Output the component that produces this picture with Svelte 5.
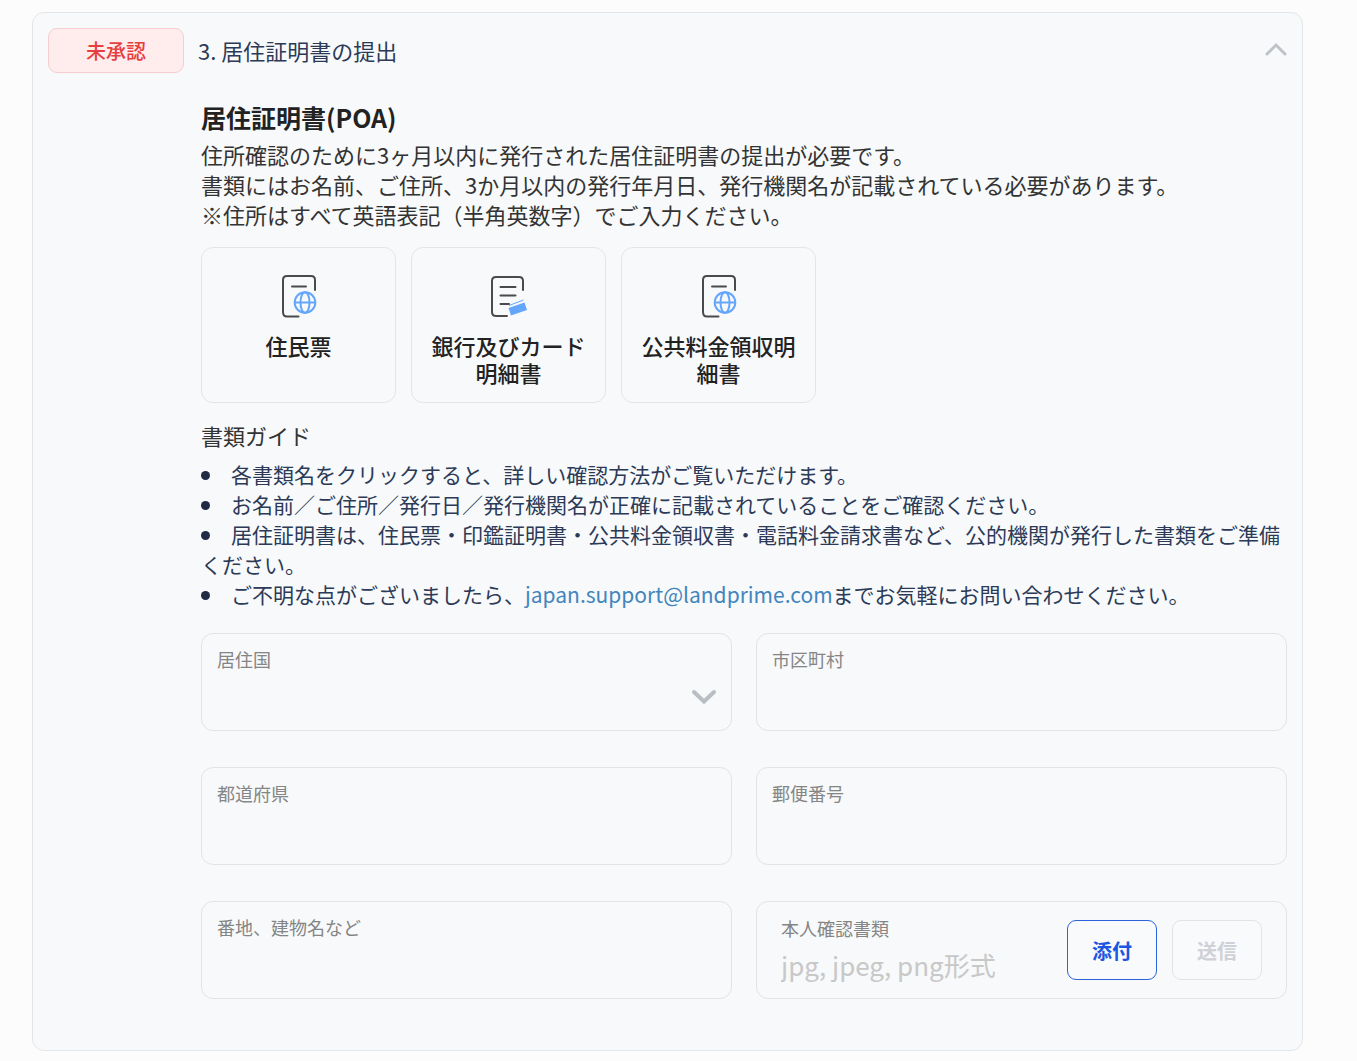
<script>
  let expanded = true;
  let country = '';
  let city = '';
  let prefecture = '';
  let postcode = '';
  let address = '';
  let fileName = '';

  const documents = [
    { name: '住民票', icon: 'globe' },
    { name: '銀行及びカード明細書', icon: 'card' },
    { name: '公共料金領収明細書', icon: 'globe' }
  ];

  const toggle = () => { expanded = !expanded; };
</script>

<section class="panel">
  <header class="panel-head">
    <span class="badge">未承認</span>
    <h2 class="title">3. 居住証明書の提出</h2>
    <button class="toggle" type="button" aria-label="開閉" aria-expanded={expanded} on:click={toggle}>
      <svg width="24" height="20" viewBox="0 0 24 20"><path d="M4 13 L13 4 L22 13" /></svg>
    </button>
  </header>

  {#if expanded}
    <div class="panel-body">
      <h3 class="heading">居住証明書(POA)</h3>
      <p class="desc">
        住所確認のために3ヶ月以内に発行された居住証明書の提出が必要です。<br />
        書類にはお名前、ご住所、3か月以内の発行年月日、発行機関名が記載されている必要があります。<br />
        ※住所はすべて英語表記（半角英数字）でご入力ください。
      </p>

      <div class="docs">
        {#each documents as doc}
          <button class="doc" type="button">
            <svg class="doc-icon" width="44" height="48" viewBox="0 0 44 48">
              {#if doc.icon === 'globe'}
                <g class="ink">
                  <path d="M38 18 V8 Q38 4 34 4 H10 Q6 4 6 8 V40 Q6 44.500 10 44.500 H21.500" />
                  <path d="M15 14.500 H29" />
                </g>
                <g class="globe">
                  <circle cx="28" cy="30.500" r="10.300" />
                  <ellipse cx="28" cy="30.500" rx="4.500" ry="10.300" />
                  <path d="M17.700 30.500 H38.300" />
                </g>
              {:else}
                <g class="ink">
                  <path d="M36 18 V9 Q36 5 32 5 H9 Q5 5 5 9 V40 Q5 44 9 44 H20" />
                  <path d="M13.500 15 H28.500 M13.500 23.500 H28.500 M13.500 32 H22" />
                </g>
                <path class="solid" d="M21.500 36 L37.500 30.500 L40 38 L24 43.500 Z" />
                <path class="strip" d="M22 33.500 L36.500 28" />
              {/if}
            </svg>
            <span class="doc-name">{doc.name}</span>
          </button>
        {/each}
      </div>

      <h4 class="guide-title">書類ガイド</h4>
      <ul class="guide">
        <li>各書類名をクリックすると、詳しい確認方法がご覧いただけます。</li>
        <li>お名前／ご住所／発行日／発行機関名が正確に記載されていることをご確認ください。</li>
        <li>居住証明書は、住民票・印鑑証明書・公共料金領収書・電話料金請求書など、公的機関が発行した書類をご準備ください。</li>
        <li>ご不明な点がございましたら、<a href="mailto:japan.support@landprime.com">japan.support@landprime.com</a>までお気軽にお問い合わせください。</li>
      </ul>

      <form class="fields" on:submit|preventDefault>
        <div class="field">
          <label for="country">居住国</label>
          <select id="country" bind:value={country}>
            <option value=""></option>
            <option value="jp">日本</option>
          </select>
          <svg class="arrow" width="28" height="18" viewBox="0 0 28 18"><path d="M4 4 L14 13.500 L24 4" /></svg>
        </div>
        <div class="field">
          <label for="city">市区町村</label>
          <input id="city" type="text" bind:value={city} />
        </div>
        <div class="field">
          <label for="prefecture">都道府県</label>
          <input id="prefecture" type="text" bind:value={prefecture} />
        </div>
        <div class="field">
          <label for="postcode">郵便番号</label>
          <input id="postcode" type="text" bind:value={postcode} />
        </div>
        <div class="field">
          <label for="address">番地、建物名など</label>
          <input id="address" type="text" bind:value={address} />
        </div>
        <div class="field upload">
          <div class="upload-text">
            <label for="document">本人確認書類</label>
            <input id="document" type="text" placeholder="jpg, jpeg, png形式" readonly value={fileName} />
          </div>
          <button class="btn attach" type="button">添付</button>
          <button class="btn send" type="submit" disabled>送信</button>
        </div>
      </form>
    </div>
  {/if}
</section>

<style>
  :global(body) { background: #fcfcfc; font-family: "Noto Sans CJK JP", sans-serif; }
  .panel, .panel * { box-sizing: border-box; }
  .panel { margin: 12px 54px 8px 32px; padding: 15px 15px 51px; border: 1px solid #e3e6e8; border-radius: 12px; background: #f7f9fa; }
  h2, h3, h4, p, ul { margin: 0; padding: 0; font-weight: 400; }
  button, input, select { font-family: inherit; }
  svg { display: block; fill: none; }

  .panel-head { display: flex; align-items: center; gap: 14px; }
  .badge { width: 136px; height: 45px; border: 1px solid #f7cdd0; border-radius: 9px; background: #ffecec; color: #e5403f; font-size: 20px; font-weight: 500; line-height: 43px; text-align: center; }
  .title { flex: 1; color: #2c3a57; font-size: 22px; line-height: 42px; padding-bottom: 2px; }
  .toggle { padding: 0; border: 0; background: none; cursor: pointer; }
  .toggle path { stroke: #bfc3c8; stroke-width: 3; stroke-linecap: round; }

  .panel-body { padding: 24px 0 0 153px; }
  .heading { margin-bottom: 2px; color: #222; font-size: 25px; font-weight: 700; line-height: 40px; }
  .desc { color: #333; font-size: 22px; line-height: 30px; }

  .docs { display: flex; gap: 15px; margin-top: 18px; }
  .doc { width: 195px; height: 156px; padding: 24px 16px 0; display: flex; flex-direction: column; align-items: center; border: 1px solid #e3e6e9; border-radius: 12px; background: #f8f9fb; cursor: pointer; }
  .doc-name { margin-top: 12px; color: #222; font-size: 22px; font-weight: 500; line-height: 27px; }
  .ink { stroke: #4a4a4a; stroke-width: 2; stroke-linecap: round; }
  .globe { stroke: #64a6fb; stroke-width: 2; }
  .solid { fill: #64a6fb; }
  .strip { stroke: #64a6fb; stroke-width: 1; }

  .guide-title { margin-top: 17px; color: #333; font-size: 22px; line-height: 30px; }
  .guide { margin-top: 9px; color: #2c3a57; font-size: 21px; line-height: 30px; list-style: none; }
  .guide li::before { content: ''; display: inline-block; width: 9px; height: 9px; margin-right: 21px; border-radius: 50%; background: #1f2a44; vertical-align: 3px; }
  .guide a { color: #4285bd; text-decoration: none; }

  .fields { display: grid; grid-template-columns: 1fr 1fr; gap: 36px 24px; margin-top: 24px; }
  .field { position: relative; display: flex; flex-direction: column; height: 98px; padding: 11px 15px; border: 1px solid #e1e4e7; border-radius: 12px; }
  .field label { color: #858585; font-size: 18px; line-height: 28px; }
  .field input, .field select { width: 100%; height: 44px; padding: 0; border: 0; outline: 0; background: none; color: #333; font-size: 24px; appearance: none; }
  .arrow { position: absolute; right: 13px; bottom: 24px; pointer-events: none; }
  .arrow path { stroke: #b9bec4; stroke-width: 4; stroke-linecap: round; }

  .upload { flex-direction: row; align-items: center; gap: 15px; padding: 0 24px; }
  .upload-text { flex: 1; min-width: 0; display: flex; flex-direction: column; }
  .field input::placeholder { color: #c8c8c8; opacity: 1; }
  .upload input { font-size: 26px; }
  .btn { width: 90px; height: 60px; padding: 0; border: 1px solid; border-radius: 9px; background: #f8fafc; font-size: 20px; font-weight: 700; }
  .attach { border-color: #2d62dd; color: #1c55e0; cursor: pointer; }
  .send { border-color: #e1e4e7; color: #cfd1d6; }
</style>
